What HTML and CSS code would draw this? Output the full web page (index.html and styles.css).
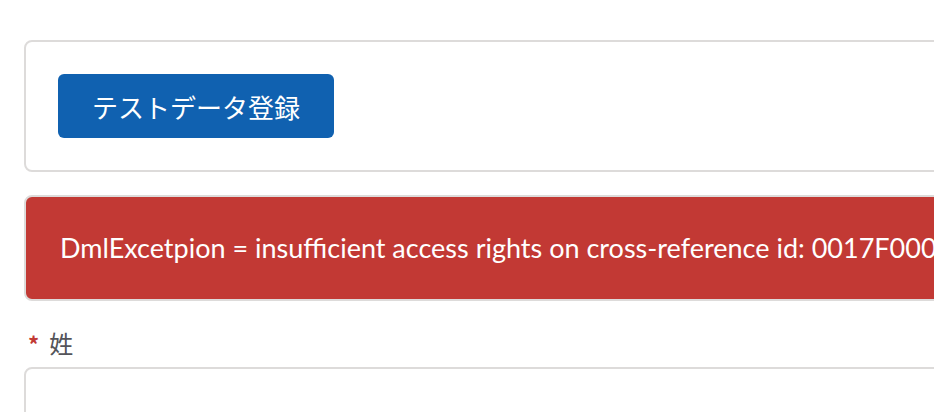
FILE: index.html
```html
<!DOCTYPE html>
<html lang="ja">
<head>
  <meta charset="UTF-8" />
  <title>テストデータ登録</title>
  <link rel="stylesheet" href="styles.css">
</head>
<body>
  <div class="page">
    <div class="card">
      <button type="button" class="brand-btn">テストデータ登録</button>
    </div>

    <div class="error-box">
      DmlExcetpion = insufficient access rights on cross-reference id: 0017F00000AbCdEQAV
    </div>

    <div class="field">
      <label class="field-label" for="lastName"><abbr class="required" title="required">*</abbr>姓</label>
      <input type="text" id="lastName" class="field-input" />
    </div>
  </div>
</body>
</html>
```

FILE: styles.css
```css
body {
  margin: 0;
  background: #ffffff;
  font-family: Lato, "Noto Sans CJK JP", sans-serif;
  overflow: hidden;
}
.page {
  width: 1300px;
  padding: 40px 0 0 24px;
}
.card {
  border: 2px solid #dddbda;
  border-radius: 8px;
  padding: 32px;
}
.brand-btn {
  display: block;
  width: 276px;
  height: 64px;
  padding: 0;
  border: none;
  border-radius: 6px;
  background: #1061b0;
  color: #ffffff;
  font-family: "Noto Sans CJK JP", sans-serif;
  font-size: 26px;
  cursor: pointer;
}
.error-box {
  margin-top: 23px;
  border: 2px solid #dddbda;
  border-radius: 8px;
  background: #c23934;
  color: #ffffff;
  font-size: 27px;
  line-height: 102px;
  padding-left: 34px;
  white-space: nowrap;
}
.field {
  margin-top: 24px;
}
.field-label {
  display: block;
  color: #54545a;
  font-family: "Noto Sans CJK JP", sans-serif;
  font-size: 24px;
  line-height: 36px;
  margin-bottom: 6px;
}
.required {
  color: #c23934;
  text-decoration: none;
  font-size: 22px;
  font-weight: bold;
  margin: 0 10px 0 4px;
}
.field-input {
  display: block;
  box-sizing: border-box;
  width: 100%;
  height: 64px;
  border: 2px solid #dddbda;
  border-radius: 8px;
}
```
